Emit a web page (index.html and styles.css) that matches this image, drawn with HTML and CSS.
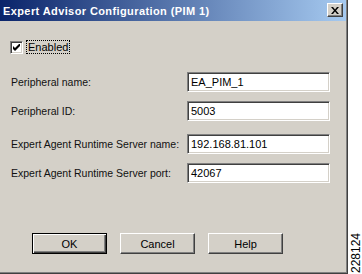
FILE: index.html
```html
<!DOCTYPE html>
<html lang="en">

<head>
    <meta charset="UTF-8">
    <meta name="viewport" content="width=device-width, initial-scale=1.0">
    <title>Expert Advisor Configuration (PIM 1)</title>
    <link rel="stylesheet" href="styles.css">
</head>

<body>
    <div class="page">
        <div class="dialog">
            <div class="titlebar">
                <span class="title">Expert Advisor Configuration (PIM 1)</span>
                <span class="close-btn">
                    <svg width="8" height="7" viewBox="0 0 8 7">
                        <path d="M0 0h2l2 2.5l2-2.5h2l-3 3.5l3 3.5h-2l-2-2.5l-2 2.5h-2l3-3.5z" fill="#000" />
                    </svg>
                </span>
            </div>

            <div class="content">
                <div class="check-row">
                    <span class="checkbox">
                        <svg width="7" height="7" viewBox="0 0 7 7">
                            <path d="M0 2v3l2 2l5-5v-3l-5 5z" fill="#000" />
                        </svg>
                    </span>
                    <span class="check-label">Enabled</span>
                </div>

                <div class="fields">
                    <div class="field">
                        <span class="field-label">Peripheral name:</span>
                        <span class="text-box">EA_PIM_1</span>
                    </div>
                    <div class="field">
                        <span class="field-label">Peripheral ID:</span>
                        <span class="text-box">5003</span>
                    </div>
                    <!-- third row sits a few pixels lower in the original -->
                    <div class="field field-spaced">
                        <span class="field-label">Expert Agent Runtime Server name:</span>
                        <span class="text-box">192.168.81.101</span>
                    </div>
                    <div class="field">
                        <span class="field-label">Expert Agent Runtime Server port:</span>
                        <span class="text-box">42067</span>
                    </div>
                </div>

                <div class="buttons">
                    <span class="btn btn-default">OK</span>
                    <span class="btn">Cancel</span>
                    <span class="btn">Help</span>
                </div>
            </div>
        </div>

        <div class="figure-id">228124</div>
    </div>
</body>

</html>
```

FILE: styles.css
```css
* {
    margin: 0;
    padding: 0;
    box-sizing: border-box;
}

body {
    font-family: "Liberation Sans", Arial, sans-serif;
    font-size: 11px;
    color: #000;
    background-color: #fff;
}

.page {
    display: flex;
    align-items: flex-end;
    gap: 2px;
    height: 274px;
}

.dialog {
    width: 348px;
    height: 274px;
    background-color: #d4d0c8;
    border-right: 1px solid #404040;
    border-bottom: 1px solid #404040;
    box-shadow: inset -1px -1px 0 #808080;
    display: flex;
    flex-direction: column;
}

.titlebar {
    height: 21px;
    margin-right: 1px;
    display: flex;
    align-items: center;
    justify-content: space-between;
    padding: 0 3px 0 3px;
    background: linear-gradient(to right, #0a246a, #a6caf0);
}

.title {
    color: #fff;
    font-weight: bold;
    letter-spacing: 0.4px;
}

.close-btn {
    width: 16px;
    height: 14px;
    margin-top: -1px;
    display: flex;
    align-items: center;
    justify-content: center;
    background-color: #d4d0c8;
    border-top: 1px solid #fff;
    border-left: 1px solid #fff;
    border-right: 1px solid #404040;
    border-bottom: 1px solid #404040;
    box-shadow: inset -1px -1px 0 #808080;
}

.content {
    padding: 19px 0 0 10px;
}

.check-row {
    display: flex;
    align-items: center;
    gap: 4px;
    height: 14px;
}

.checkbox {
    width: 13px;
    height: 13px;
    display: flex;
    align-items: center;
    justify-content: center;
    background-color: #fff;
    border-top: 1px solid #808080;
    border-left: 1px solid #808080;
    border-right: 1px solid #fff;
    border-bottom: 1px solid #fff;
    box-shadow: inset 1px 1px 0 #404040, inset -1px -1px 0 #d4d0c8;
}

.check-label {
    padding: 0 1px;
    line-height: 12px;
    outline: 1px dotted #000;
    outline-offset: 0;
}

.fields {
    margin-top: 18px;
    display: flex;
    flex-direction: column;
    gap: 9px;
}

.field {
    display: flex;
    align-items: center;
    height: 20px;
}

.field-spaced {
    margin-top: 4px;
}

.field-label {
    width: 177px;
    padding-left: 1px;
    font-size: 10.5px;
    color: #111;
    white-space: nowrap;
}

.text-box {
    width: 143px;
    height: 20px;
    padding: 0 3px;
    display: flex;
    align-items: center;
    background-color: #fff;
    border-top: 1px solid #808080;
    border-left: 1px solid #808080;
    border-right: 1px solid #fff;
    border-bottom: 1px solid #fff;
    box-shadow: inset 1px 1px 0 #404040, inset -1px -1px 0 #d4d0c8;
}

.buttons {
    margin-top: 50px;
    margin-left: 22px;
    display: flex;
    gap: 13px;
}

.btn {
    width: 75px;
    height: 21px;
    display: flex;
    align-items: center;
    justify-content: center;
    background-color: #d4d0c8;
    border-top: 1px solid #fff;
    border-left: 1px solid #fff;
    border-right: 1px solid #404040;
    border-bottom: 1px solid #404040;
    box-shadow: inset -1px -1px 0 #808080;
}

.btn-default {
    border: 1px solid #000;
    box-shadow: inset 1px 1px 0 #fff, inset -1px -1px 0 #404040, inset -2px -2px 0 #808080;
}

.figure-id {
    writing-mode: vertical-rl;
    transform: rotate(180deg);
    font-size: 12px;
    line-height: 1;
    margin-bottom: 1px;
}
```
